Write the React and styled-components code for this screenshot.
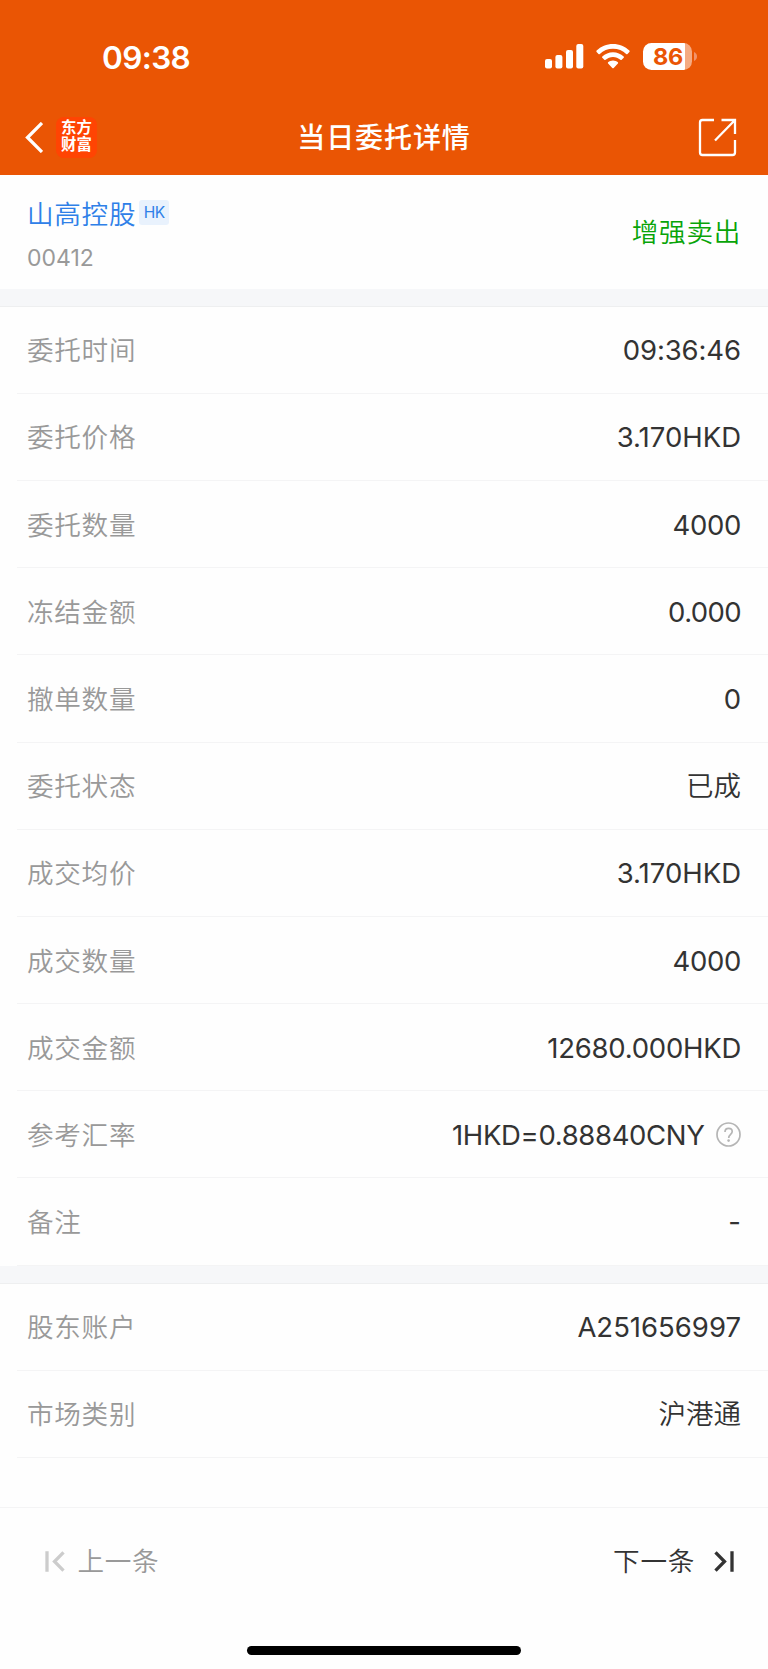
import React from "react";
import styled, { createGlobalStyle } from "styled-components";

const GlobalStyle = createGlobalStyle`
  * { box-sizing: border-box; }
  html, body { margin: 0; padding: 0; background: #fefefe; }
  body { font-family: Inter, "Noto Sans CJK SC", sans-serif; color: #333; }
`;

const Screen = styled.main`
  width: 768px;
  height: 1669px;
  display: flex;
  flex-direction: column;
  overflow: hidden;
  background: #fefefe;
`;

const Header = styled.header`
  height: 175px;
  flex: none;
  background: #ea5504;
  color: #fff;
`;

const StatusBar = styled.div`
  height: 99px;
  padding: 14px 71px 0 102px;
  display: flex;
  align-items: center;
  justify-content: space-between;
`;

const Clock = styled.span`
  padding-top: 3px;
  font-size: 31.5px;
  line-height: 40px;
  font-weight: 600;
  letter-spacing: -0.6px;
`;

const StatusIcons = styled.div`
  display: flex;
  align-items: center;
  svg { display: block; }
`;

const Battery = styled.div`
  display: flex;
  align-items: center;
  margin-left: 13px;
  gap: 2px;
`;

const BatteryBody = styled.div`
  width: 49px;
  height: 27px;
  padding-left: 1px;
  border-radius: 8.5px;
  background: linear-gradient(90deg, #fff 0 42.5px, #f5aa82 42.5px);
  color: #ea5504;
  font-size: 23.5px;
  line-height: 27px;
  font-weight: 700;
  letter-spacing: -0.4px;
  text-align: center;
`;

const NavBar = styled.div`
  height: 76px;
  padding: 0 25px;
  display: grid;
  grid-template-columns: 1fr auto 1fr;
  align-items: center;
`;

const NavLeft = styled.div`
  display: flex;
  align-items: center;
  gap: 13px;
  svg { display: block; }
`;

const Brand = styled.div`
  width: 41px;
  height: 41px;
  padding: 1px 5px 0;
  border-radius: 8px;
  background: #ff4403;
  font-family: "Noto Sans CJK SC", sans-serif;
  font-size: 15.4px;
  line-height: 17.4px;
  font-weight: 700;
  word-break: break-all;
`;

const Title = styled.h1`
  margin: 0;
  padding-top: 2px;
  font-size: 28px;
  line-height: 40px;
  font-weight: 500;
  letter-spacing: 0.9px;
`;

const NavRight = styled.div`
  display: flex;
  justify-content: flex-end;
  padding-right: 6px;
  svg { display: block; }
`;

const StockPanel = styled.section`
  height: 113.6px;
  flex: none;
  padding: 0 27px;
  display: flex;
  align-items: center;
  justify-content: space-between;
`;

const StockInfo = styled.div`
  padding-top: 7px;
  display: flex;
  flex-direction: column;
  gap: 8px;
`;

const StockName = styled.div`
  display: flex;
  align-items: center;
  gap: 3px;
  color: #2f80e8;
  font-size: 26.6px;
  line-height: 38px;
  font-weight: 350;
  letter-spacing: 0.7px;
`;

const MarketTag = styled.span`
  width: 30px;
  height: 25px;
  margin-bottom: 3px;
  border-radius: 3px;
  background: #e9f2fd;
  font-size: 15.5px;
  line-height: 26px;
  font-weight: 400;
  letter-spacing: -0.5px;
  text-align: center;
`;

const StockCode = styled.div`
  color: #999;
  font-size: 23px;
  line-height: 34px;
`;

const Side = styled.div`
  color: #08a408;
  font-size: 26.6px;
  line-height: 38px;
  font-weight: 350;
  letter-spacing: 0.7px;
`;

const Divider = styled.div`
  height: 18px;
  flex: none;
  background: #f6f7f9;
  border-bottom: 1px solid #eeeff0;
`;

const Rows = styled.dl`
  margin: 0;
  flex: none;
`;

const Row = styled.div`
  height: 87.2px;
  margin-left: 17px;
  padding: 1px 27px 0 10px;
  display: flex;
  align-items: center;
  justify-content: space-between;
  border-bottom: 1px solid #f4f4f5;
`;

const Label = styled.dt`
  color: #999;
  font-size: 26.6px;
  line-height: 38px;
  font-weight: 350;
  letter-spacing: 0.7px;
`;

const Value = styled.dd`
  margin: 0;
  display: flex;
  align-items: center;
  gap: 11.5px;
  font-size: 27.5px;
  line-height: 38px;
  font-weight: ${(p) => (p.$hanzi ? 350 : 380)};
  letter-spacing: ${(p) => p.$tracking || 0}px;
  svg { display: block; }
`;

const Footer = styled.footer`
  margin-top: auto;
  height: 162px;
  flex: none;
  border-top: 1px solid #f4f4f5;
  display: flex;
  flex-direction: column;
  justify-content: space-between;
  align-items: center;
`;

const Pager = styled.nav`
  width: 100%;
  height: 106px;
  padding: 0 34px 0 45px;
  display: flex;
  align-items: center;
  justify-content: space-between;
`;

const PageButton = styled.button`
  padding: 0;
  border: 0;
  background: none;
  font: inherit;
  font-size: 26.6px;
  line-height: 38px;
  font-weight: 350;
  letter-spacing: 0.7px;
  color: ${(p) => (p.disabled ? "#999" : "#333")};
  display: flex;
  align-items: center;
  gap: ${(p) => p.$gap}px;
  svg { display: block; }
`;

const HomeIndicator = styled.div`
  width: 274px;
  height: 9px;
  margin-bottom: 14px;
  border-radius: 5px;
  background: #000;
`;

const Signal = () => (
  <svg width="39" height="25" viewBox="0 0 39 25" fill="#fff">
    <rect x="0" y="15" width="7" height="9.5" rx="2" />
    <rect x="10.4" y="11" width="7" height="13.5" rx="2" />
    <rect x="21" y="6" width="7" height="18.5" rx="2" />
    <rect x="31.3" y="0" width="7" height="24.5" rx="2" />
  </svg>
);

const WifiGlyph = styled.svg`
  margin-left: 12px;
`;

const Wifi = () => (
  <WifiGlyph width="34" height="25" viewBox="0 0 34 25" fill="#fff">
    <path d="M17 0C10.6 0 4.8 2.5 .6 6.6c-.4.4-.4.9 0 1.3L2.5 9.9c.4.4.9.4 1.3 0C7.2 6.6 11.9 4.7 17 4.7s9.8 1.9 13.2 5.2c.4.4.9.4 1.3 0l1.9-2c.4-.4.4-.9 0-1.3C29.2 2.5 23.4 0 17 0z" />
    <path d="M17 8.3c-4.1 0-7.9 1.6-10.7 4.2-.4.4-.4.9 0 1.3l2 2c.4.4.9.4 1.3 0 2-1.8 4.6-2.9 7.4-2.9s5.4 1.1 7.4 2.9c.4.4.9.4 1.3 0l2-2c.4-.4.4-.9 0-1.3C24.9 9.9 21.1 8.3 17 8.3z" />
    <path d="M17 16.4c-1.9 0-3.6.7-4.9 1.8-.4.4-.4.9 0 1.3l4.2 4.4c.4.4 1 .4 1.4 0l4.2-4.4c.4-.4.4-.9 0-1.3-1.3-1.1-3-1.8-4.9-1.8z" />
  </WifiGlyph>
);

const BatteryTip = () => (
  <svg width="3" height="9" viewBox="0 0 3 9" fill="#f2936a">
    <path d="M0 0C1.8.6 3 2.3 3 4.5S1.8 8.4 0 9z" />
  </svg>
);

const BackIcon = () => (
  <svg width="18" height="31" viewBox="0 0 18 31" fill="none" stroke="#fff" strokeWidth="3.3">
    <path d="M17 1 2.5 15.5 17 30" />
  </svg>
);

const ShareIcon = () => (
  <svg width="39" height="39" viewBox="0 0 39 39" fill="none" stroke="#fff" strokeWidth="2.3">
    <path d="M16 2H4.5A2.5 2.5 0 0 0 2 4.5v30A2.5 2.5 0 0 0 4.5 37h30a2.5 2.5 0 0 0 2.5-2.5V22M23.5 2H37v14M37 2 17 22.5" />
  </svg>
);

const HelpIcon = () => (
  <svg width="25" height="25" viewBox="0 0 25 25" fill="none" stroke="#b5b5b5" strokeWidth="1.7">
    <circle cx="12.5" cy="12.5" r="11.5" />
    <path d="M9 10c0-2.2 1.4-3.6 3.6-3.6s3.6 1.3 3.6 3.2c0 2.7-3.5 2.9-3.5 6.3" />
    <circle cx="12.6" cy="18.6" r="1.3" fill="#b5b5b5" stroke="none" />
  </svg>
);

const FirstIcon = () => (
  <svg width="20" height="21" viewBox="0 0 20 21" fill="none" stroke="#ccc" strokeWidth="3.3">
    <path d="M2 .3v20.4M18.5 1.3 9.5 10.5l9 9.2" />
  </svg>
);

const LastIcon = () => (
  <svg width="20" height="21" viewBox="0 0 20 21" fill="none" stroke="#333" strokeWidth="3.3">
    <path d="M18 .3v20.4M1.5 1.3l9 9.2-9 9.2" />
  </svg>
);

const ORDER = [
  { label: "委托时间", value: "09:36:46", tracking: -0.1 },
  { label: "委托价格", value: "3.170HKD" },
  { label: "委托数量", value: "4000", tracking: -0.35 },
  { label: "冻结金额", value: "0.000", tracking: -0.6 },
  { label: "撤单数量", value: "0" },
  { label: "委托状态", value: "已成", hanzi: true },
  { label: "成交均价", value: "3.170HKD" },
  { label: "成交数量", value: "4000", tracking: -0.35 },
  { label: "成交金额", value: "12680.000HKD", tracking: -0.25 },
  { label: "参考汇率", value: "1HKD=0.88840CNY", tracking: -0.35, help: true },
  { label: "备注", value: "-" },
];

const ACCOUNT = [
  { label: "股东账户", value: "A251656997" },
  { label: "市场类别", value: "沪港通", hanzi: true },
];

const DetailRows = ({ items }) => (
  <Rows>
    {items.map((item) => (
      <Row key={item.label}>
        <Label>{item.label}</Label>
        <Value $tracking={item.tracking} $hanzi={item.hanzi}>
          {item.value}
          {item.help && <HelpIcon />}
        </Value>
      </Row>
    ))}
  </Rows>
);

export default function App() {
  return (
    <>
      <GlobalStyle />
      <Screen>
        <Header>
          <StatusBar>
            <Clock>09:38</Clock>
            <StatusIcons>
              <Signal />
              <Wifi />
              <Battery>
                <BatteryBody>86</BatteryBody>
                <BatteryTip />
              </Battery>
            </StatusIcons>
          </StatusBar>
          <NavBar>
            <NavLeft>
              <BackIcon />
              <Brand>东方财富</Brand>
            </NavLeft>
            <Title>当日委托详情</Title>
            <NavRight>
              <ShareIcon />
            </NavRight>
          </NavBar>
        </Header>
        <StockPanel>
          <StockInfo>
            <StockName>
              山高控股
              <MarketTag>HK</MarketTag>
            </StockName>
            <StockCode>00412</StockCode>
          </StockInfo>
          <Side>增强卖出</Side>
        </StockPanel>
        <Divider />
        <DetailRows items={ORDER} />
        <Divider />
        <DetailRows items={ACCOUNT} />
        <Footer>
          <Pager>
            <PageButton disabled $gap={12.5}>
              <FirstIcon />
              上一条
            </PageButton>
            <PageButton $gap={19}>
              下一条
              <LastIcon />
            </PageButton>
          </Pager>
          <HomeIndicator />
        </Footer>
      </Screen>
    </>
  );
}
